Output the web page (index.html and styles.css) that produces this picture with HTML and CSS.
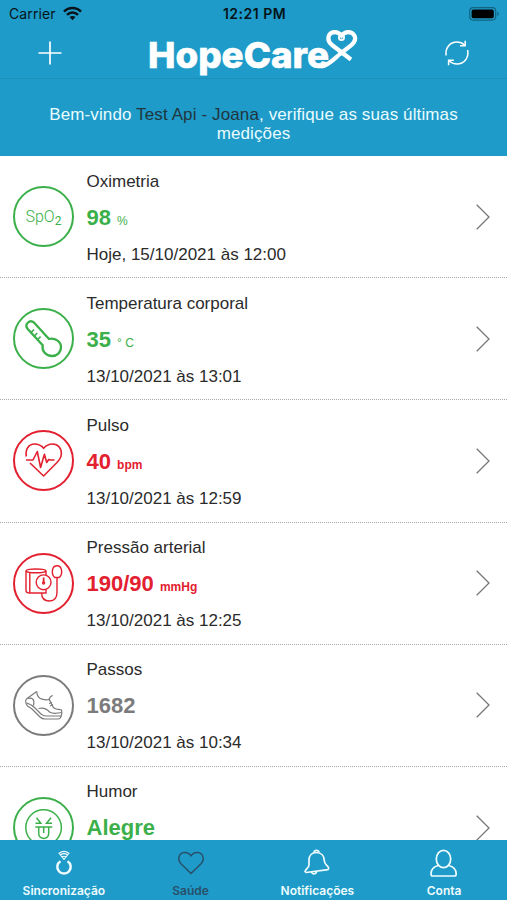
FILE: index.html
```html
<!DOCTYPE html>
<html lang="pt">
<head>
    <meta charset="UTF-8">
    <meta name="viewport" content="width=device-width, initial-scale=1.0">
    <title>HopeCare</title>
    <link rel="stylesheet" href="styles.css">
</head>
<body>
    <header class="header">
        <div class="status-bar">
            <div class="carrier">
                <span>Carrier</span>
                <svg width="19" height="15" viewBox="0 0 19 15" fill="none" stroke="#071318" stroke-width="2.5">
                    <path d="M1 5.6C5.8 .8 13.2 .8 18 5.6M4 8.9C7.2 5.8 11.8 5.8 15 8.9"/>
                    <path d="M6.5 11.1C8.2 9.5 10.8 9.5 12.5 11.1L9.5 14.2Z" fill="#071318" stroke="none"/>
                </svg>
            </div>
            <span class="time">12:21 PM</span>
            <svg class="battery" width="31" height="14" viewBox="0 0 31 14">
                <rect x=".7" y=".7" width="26" height="12.4" rx="3.5" fill="none" stroke="#126482" stroke-width="1.2"/>
                <rect x="2.6" y="2.6" width="22.2" height="8.6" rx="1.8" fill="#000"/>
                <path d="M28.4 4.8C30.3 5.5 30.3 8.4 28.4 9.1Z" fill="#126482"/>
            </svg>
        </div>
        <nav class="nav-bar">
            <button class="nav-btn">
                <svg width="24" height="24" viewBox="0 0 24 24" fill="none" stroke="#fff" stroke-width="1.7">
                    <path d="M12 .5V23.5M.5 12H23.5"/>
                </svg>
            </button>
            <svg class="logo" width="210" height="50" viewBox="0 0 210 50">
                <text class="logo-text" x="0" y="39.500" textLength="181" lengthAdjust="spacingAndGlyphs">HopeCare</text>
                <path d="M173 38.500C180 38 186 31 192 26L203 17.500C207 14 208 10 206 7C203.500 3 197 3 193.500 7.500C190 3 183.500 3 181.200 7C179.500 10.500 180.500 14 184 17L203 31.500" fill="none" stroke="#fff" stroke-width="4.200"/>
                <circle cx="193.500" cy="9.500" r="2.600" fill="none" stroke="#fff" stroke-width="1.800"/>
            </svg>
            <button class="nav-btn">
                <svg width="26" height="26" viewBox="0 0 26 26" fill="none" stroke="#fff" stroke-width="1.500">
                    <path d="M2.200 15.500C.8 8 6 2 13 2C16 2 18.500 3 20.600 5M23.600 10C25.200 18 20 24 13 24C9.800 24 7.200 23 5.200 20.800"/>
                    <path d="M21.200 .8V5.800H16M4.600 25.200V20.200H9.800"/>
                </svg>
            </button>
        </nav>
        <p class="welcome">Bem-vindo <span class="user-name">Test Api - Joana</span>, verifique as suas últimas medições</p>
    </header>

    <main class="list">
        <div class="item green">
            <svg class="icon" viewBox="0 0 61 61">
                <circle class="ring" cx="30.500" cy="30.500" r="29.500"/>
                <text class="spo" x="12.500" y="35.500">SpO<tspan class="sub" dy="3.200">2</tspan></text>
            </svg>
            <div class="info">
                <h3>Oximetria</h3>
                <div class="value">98 <span class="unit thin">%</span></div>
                <div class="date">Hoje, 15/10/2021 às 12:00</div>
            </div>
            <svg class="chevron" viewBox="0 0 14 26"><path d="M.7 .8L13 13L.7 25.200"/></svg>
        </div>

        <div class="item green">
            <svg class="icon" viewBox="0 0 61 61">
                <circle class="ring" cx="30.500" cy="30.500" r="29.500"/>
                <g stroke-width="2.300">
                    <path d="M29.700 37.300L14.700 21C11 16.500 16.500 11 21 14.500L36 31C42 29.500 48 33.500 48 39C48 44.500 44 48 39 48C33 48 28.500 43 29.700 37.300Z"/>
                    <path d="M18 24.500L21 21.700M21.300 28L24.300 25.200M24.600 31.500L27.600 28.700" stroke-width="1.600"/>
                </g>
            </svg>
            <div class="info">
                <h3>Temperatura corporal</h3>
                <div class="value">35 <span class="unit thin">° C</span></div>
                <div class="date">13/10/2021 às 13:01</div>
            </div>
            <svg class="chevron" viewBox="0 0 14 26"><path d="M.7 .8L13 13L.7 25.200"/></svg>
        </div>

        <div class="item red">
            <svg class="icon" viewBox="0 0 61 61">
                <circle class="ring" cx="30.500" cy="30.500" r="29.500"/>
                <g stroke-width="1.600" stroke-linejoin="round">
                    <path d="M13.300 26.500C12 19 16 14 21.500 14C26 14 28.500 15.500 30.600 18.300C33 15.500 35.500 14 39.500 14C45.500 14 49 19 48.300 24.500C48 28 45.500 31 43.500 33L30.600 46L17 33"/>
                    <path d="M13 30H20L24.300 21.500L27.600 37.500L31.400 24.300L33.700 32.500L35.700 29.500L37 30H41.500"/>
                </g>
            </svg>
            <div class="info">
                <h3>Pulso</h3>
                <div class="value">40 <span class="unit">bpm</span></div>
                <div class="date">13/10/2021 às 12:59</div>
            </div>
            <svg class="chevron" viewBox="0 0 14 26"><path d="M.7 .8L13 13L.7 25.200"/></svg>
        </div>

        <div class="item red">
            <svg class="icon" viewBox="0 0 61 61">
                <circle class="ring" cx="30.500" cy="30.500" r="29.500"/>
                <g stroke-width="1.400">
                    <path d="M33 22V18C33 15.300 13 15.300 13 18V37.500C13 39.500 14.500 40 17 40H33V36.500M16.800 20V40"/>
                    <path d="M13 18C15 20.400 31 20.400 33 18"/>
                    <circle cx="30.600" cy="29.300" r="7.400"/>
                    <path d="M30.600 24.500V30" stroke-width="1.800"/>
                    <circle cx="30.600" cy="30" r="1"/>
                    <path d="M41.800 24.500C38 21 38.500 12.800 44 12.800C49.500 12.800 50 21 46.200 24.500ZM44 24.500V39C44 45 41 48 36.500 48C31.500 48 28.600 45 28.600 40"/>
                </g>
            </svg>
            <div class="info">
                <h3>Pressão arterial</h3>
                <div class="value">190/90 <span class="unit">mmHg</span></div>
                <div class="date">13/10/2021 às 12:25</div>
            </div>
            <svg class="chevron" viewBox="0 0 14 26"><path d="M.7 .8L13 13L.7 25.200"/></svg>
        </div>

        <div class="item gray">
            <svg class="icon" viewBox="0 0 61 61">
                <circle class="ring" cx="30.500" cy="30.500" r="29.500"/>
                <g stroke-width="1.200" stroke-linejoin="round">
                    <path d="M23.700 16.500L14 23.500C12 25 12.600 28 14.500 31L19 34L27 42C28.500 43.500 30 44 32 44H45.500C48 44 49.500 38 48.500 35C45.500 34 43.500 35 41 33C38.500 31 38.500 27 36 24.500C36.500 22.500 37.500 21 39.700 20.500"/>
                    <path d="M23.700 16.500C24 21 26 23.500 29 24.200C31.500 24.800 34 25 36 24.500M14 28C17 29 19 30 22 33L28 39C29.500 40.300 31 41 33 41H48.500"/>
                    <path d="M15 23.500C19 22 22 24.500 20.500 30.500M25.500 33.500C31 32 34 34 36.500 37C39 38.500 44 38.500 48.500 37.500M36 28.500L39 27.500M37 31L40 29.500"/>
                </g>
            </svg>
            <div class="info">
                <h3>Passos</h3>
                <div class="value">1682</div>
                <div class="date">13/10/2021 às 10:34</div>
            </div>
            <svg class="chevron" viewBox="0 0 14 26"><path d="M.7 .8L13 13L.7 25.200"/></svg>
        </div>

        <div class="item green">
            <svg class="icon" viewBox="0 0 61 61">
                <circle class="ring" cx="30.500" cy="30.500" r="29.500"/>
                <g stroke-width="1.500">
                    <circle cx="30.600" cy="30.500" r="17.800"/>
                    <path d="M23.500 20.800L27.800 26.200H22.500M38 20.800L33.500 26.200H39M22.300 30H39.300"/>
                    <path d="M25.700 30V36.500C25.700 43 35.700 43 35.700 36.500V30M30.700 30V36"/>
                </g>
            </svg>
            <div class="info">
                <h3>Humor</h3>
                <div class="value">Alegre</div>
            </div>
            <svg class="chevron" viewBox="0 0 14 26"><path d="M.7 .8L13 13L.7 25.200"/></svg>
        </div>
    </main>

    <footer class="tab-bar">
        <a class="tab">
            <svg width="28" height="30" viewBox="0 0 28 30" fill="none" stroke="currentColor">
                <path d="M10.500 13.200A6.700 6.700 0 1 0 17.500 13.200" stroke-width="2.500"/>
                <path d="M9 5.200C12 3 16 3 19 5.200L14 11.300ZM10.300 7C12.500 5.400 15.500 5.400 17.700 7M12 9C13.300 8 14.700 8 16 9" stroke-width="1.100"/>
            </svg>
            <span>Sincronização</span>
        </a>
        <a class="tab active">
            <svg width="28" height="30" viewBox="0 0 28 30" fill="none" stroke="currentColor" stroke-width="1.500">
                <path d="M14 25.500L4 15.700C.2 11.800 1.500 5 7.300 4.500C10.500 4.300 12.700 5.700 14 8C15.300 5.700 17.500 4.300 20.700 4.500C26.500 5 27.800 11.800 24 15.700Z" stroke-linejoin="round"/>
            </svg>
            <span>Saúde</span>
        </a>
        <a class="tab">
            <svg width="28" height="30" viewBox="0 0 28 30" fill="none" stroke="currentColor" stroke-width="1.700" stroke-linejoin="round">
                <path d="M2 23.500C3 20.500 5.500 20.500 6 17V12C6 7.500 9 4.500 13.500 4.500C18.500 4.500 21 8 21.200 12C21.400 17 24 16.500 25.700 20L25 21.700L3 24.500Z"/>
                <path d="M11 4.500C11.300 1.700 15.500 1.700 16 4.500M8.500 24C9.500 27 13.500 26 13.500 23.200"/>
            </svg>
            <span>Notificações</span>
        </a>
        <a class="tab">
            <svg width="28" height="30" viewBox="0 0 28 30" fill="none" stroke="currentColor" stroke-width="1.700" stroke-linejoin="round">
                <ellipse cx="13.500" cy="11" rx="7.200" ry="8.700"/>
                <path d="M8.500 17.500C4 18.500 1 21.500 1 26C1 27.500 1.500 28 2.700 28H24.500C25.700 28 26.200 27.500 26.200 26C26.200 21.500 23 18.500 18.500 17.500"/>
            </svg>
            <span>Conta</span>
        </a>
    </footer>
</body>
</html>
```

FILE: styles.css
```css
* {
    margin: 0;
    padding: 0;
    box-sizing: border-box;
}

body {
    height: 900px;
    display: flex;
    flex-direction: column;
    overflow: hidden;
    background: #fff;
    color: #2b2b2b;
    font-family: 'Liberation Sans', Arial, sans-serif;
}

.header {
    height: 156px;
    flex-shrink: 0;
    background: #1e9bc8;
}

.status-bar {
    height: 27px;
    padding: 0 7px 0 9px;
    display: grid;
    grid-template-columns: 1fr auto 1fr;
    align-items: center;
    color: #071318;
    font-family: Inter, sans-serif;
    font-size: 13px;
}

.carrier {
    display: flex;
    align-items: center;
    gap: 7px;
    font-size: 14px;
    letter-spacing: 0.1px;
}

.time {
    font-size: 14px;
    font-weight: 600;
    letter-spacing: 0.5px;
}

.battery {
    justify-self: end;
}

.nav-bar {
    height: 52px;
    padding: 0 37px 0 38px;
    display: flex;
    align-items: center;
    justify-content: space-between;
    border-bottom: 1px solid #1b8fba;
}

.nav-btn {
    display: flex;
    background: none;
    border: none;
}

.logo-text {
    fill: #fff;
    stroke: #fff;
    stroke-width: 0.6;
    font-family: Inter, sans-serif;
    font-size: 36px;
    font-weight: 800;
}

.welcome {
    padding: 26px 40px 0;
    color: #e9fbff;
    font-size: 17px;
    letter-spacing: 0.12px;
    line-height: 19px;
    text-align: center;
}

.user-name {
    color: #20363f;
}

.list {
    flex: 1;
    min-height: 0;
    overflow: hidden;
}

.item {
    height: 122.2px;
    padding: 0 17px 0 13px;
    display: flex;
    align-items: center;
    border-bottom: 1px dotted #a8a8a8;
}

.icon {
    width: 61px;
    height: 61px;
    flex-shrink: 0;
    fill: none;
    stroke: currentColor;
}

.ring {
    stroke-width: 2;
}

.spo {
    fill: currentColor;
    stroke: none;
    font-family: Roboto, sans-serif;
    font-size: 16px;
    font-weight: 300;
}

.sub {
    font-size: 12px;
    font-weight: 400;
}

.info {
    flex: 1;
    align-self: flex-start;
    padding: 13.5px 0 0 12.5px;
}

.info h3,
.date {
    color: #2b2b2b;
    font-size: 17px;
    font-weight: normal;
    line-height: 24px;
}

.value {
    margin: 6px 0 7px;
    font-size: 22px;
    font-weight: bold;
    line-height: 36px;
}

.unit {
    font-size: 12px;
    line-height: 1;
}

.thin {
    font-weight: normal;
}

.green {
    color: #3bb04a;
}

.red {
    color: #e3202f;
}

.gray {
    color: #7b7b7b;
}

.chevron {
    width: 14px;
    height: 26px;
    fill: none;
    stroke: #777;
    stroke-width: 1.3;
}

.tab-bar {
    height: 60px;
    flex-shrink: 0;
    display: grid;
    grid-template-columns: repeat(4, 1fr);
    background: #1e9bc8;
    color: #eefcff;
    font-family: Inter, sans-serif;
    font-size: 12px;
    font-weight: 600;
}

.tab {
    padding: 8px 0 0 1px;
    display: flex;
    flex-direction: column;
    align-items: center;
    gap: 5px;
}

.tab.active {
    color: #29506a;
}
```
